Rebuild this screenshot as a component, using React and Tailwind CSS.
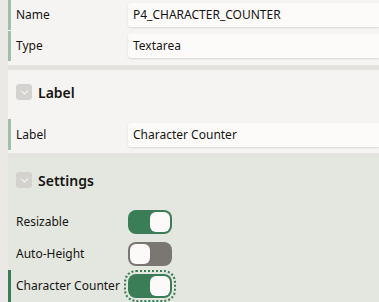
import { ChevronDown } from 'lucide-react';

const Row = ({ label, bar, children, className = '' }) => (
  <div className={`flex items-center border-l-[3px] ${bar || 'border-transparent'} ${className}`}>
    <div className="w-[117px] pl-[5px] text-[12px] whitespace-nowrap text-[#161513]">{label}</div>
    {children}
  </div>
);

const Field = ({ value }) => (
  <div className="flex-1 h-[24px] flex items-center pl-[5px] bg-[#fcfbfa] rounded-l-[3px] shadow-[0_1px_2px_rgba(0,0,0,0.12)] text-[12px] text-[#161513]">
    {value}
  </div>
);

const Toggle = ({ on, focused }) => (
  <div
    className={`w-[44px] h-[24px] rounded-[8px] p-[2px] flex ${on ? 'bg-[#3b7d56] justify-end' : 'bg-[#7a7671] justify-start'} ${
      focused ? 'outline-2 outline-dotted outline-offset-2 outline-[#3b7d56]' : ''
    }`}
  >
    <div className="w-[20px] h-[20px] rounded-[6px] bg-[#fbfaf8]"></div>
  </div>
);

const SectionHeader = ({ title, className = '' }) => (
  <div className={`flex items-center pl-[8px] ${className}`}>
    <div className="w-4 h-4 rounded-[3px] bg-[#d5d3cf] flex items-center justify-center">
      <ChevronDown size={13} strokeWidth={2} className="text-[#f5f4f2]" />
    </div>
    <span className="ml-[6px] text-[14px] font-semibold text-[#161513]">{title}</span>
  </div>
);

export default function App() {
  return (
    <div className="w-[379px] h-[302px] flex bg-[#ebe9e6] overflow-hidden" style={{ fontFamily: '"Noto Sans", "Open Sans", sans-serif' }}>
      <div className="w-2 shrink-0"></div>
      <div className="flex-1 flex flex-col">
        {/* Identification */}
        <div className="bg-[#f5f4f2] h-[65px] flex flex-col gap-[1px]">
          <Row label="Name" bar="border-[#9cc0a9]" className="h-[30px]">
            <Field value="P4_CHARACTER_COUNTER" />
          </Row>
          <Row label="Type" bar="border-[#9cc0a9]" className="h-[30px]">
            <Field value="Textarea" />
          </Row>
        </div>
        <div className="h-[5px] bg-[#e5e3df]"></div>

        {/* Label */}
        <div className="bg-[#f5f4f2] h-[83px] flex flex-col">
          <SectionHeader title="Label" className="h-[44px]" />
          <Row label="Label" bar="border-[#9cc0a9]" className="h-[31px] mt-[5px]">
            <Field value="Character Counter" />
          </Row>
        </div>
        <div className="h-[4px] bg-[#e5e3df]"></div>

        {/* Settings */}
        <div className="bg-[#e4e7df] flex-1 flex flex-col">
          <SectionHeader title="Settings" className="h-[46px]" />
          <div className="pt-[3px] flex flex-col">
            <Row label="Resizable" className="h-[32px]">
              <Toggle on />
            </Row>
            <Row label="Auto-Height" className="h-[32px]">
              <Toggle />
            </Row>
            <Row label="Character Counter" bar="border-[#3b7d56]" className="h-[32px]">
              <Toggle on focused />
            </Row>
          </div>
        </div>
      </div>
    </div>
  );
}
